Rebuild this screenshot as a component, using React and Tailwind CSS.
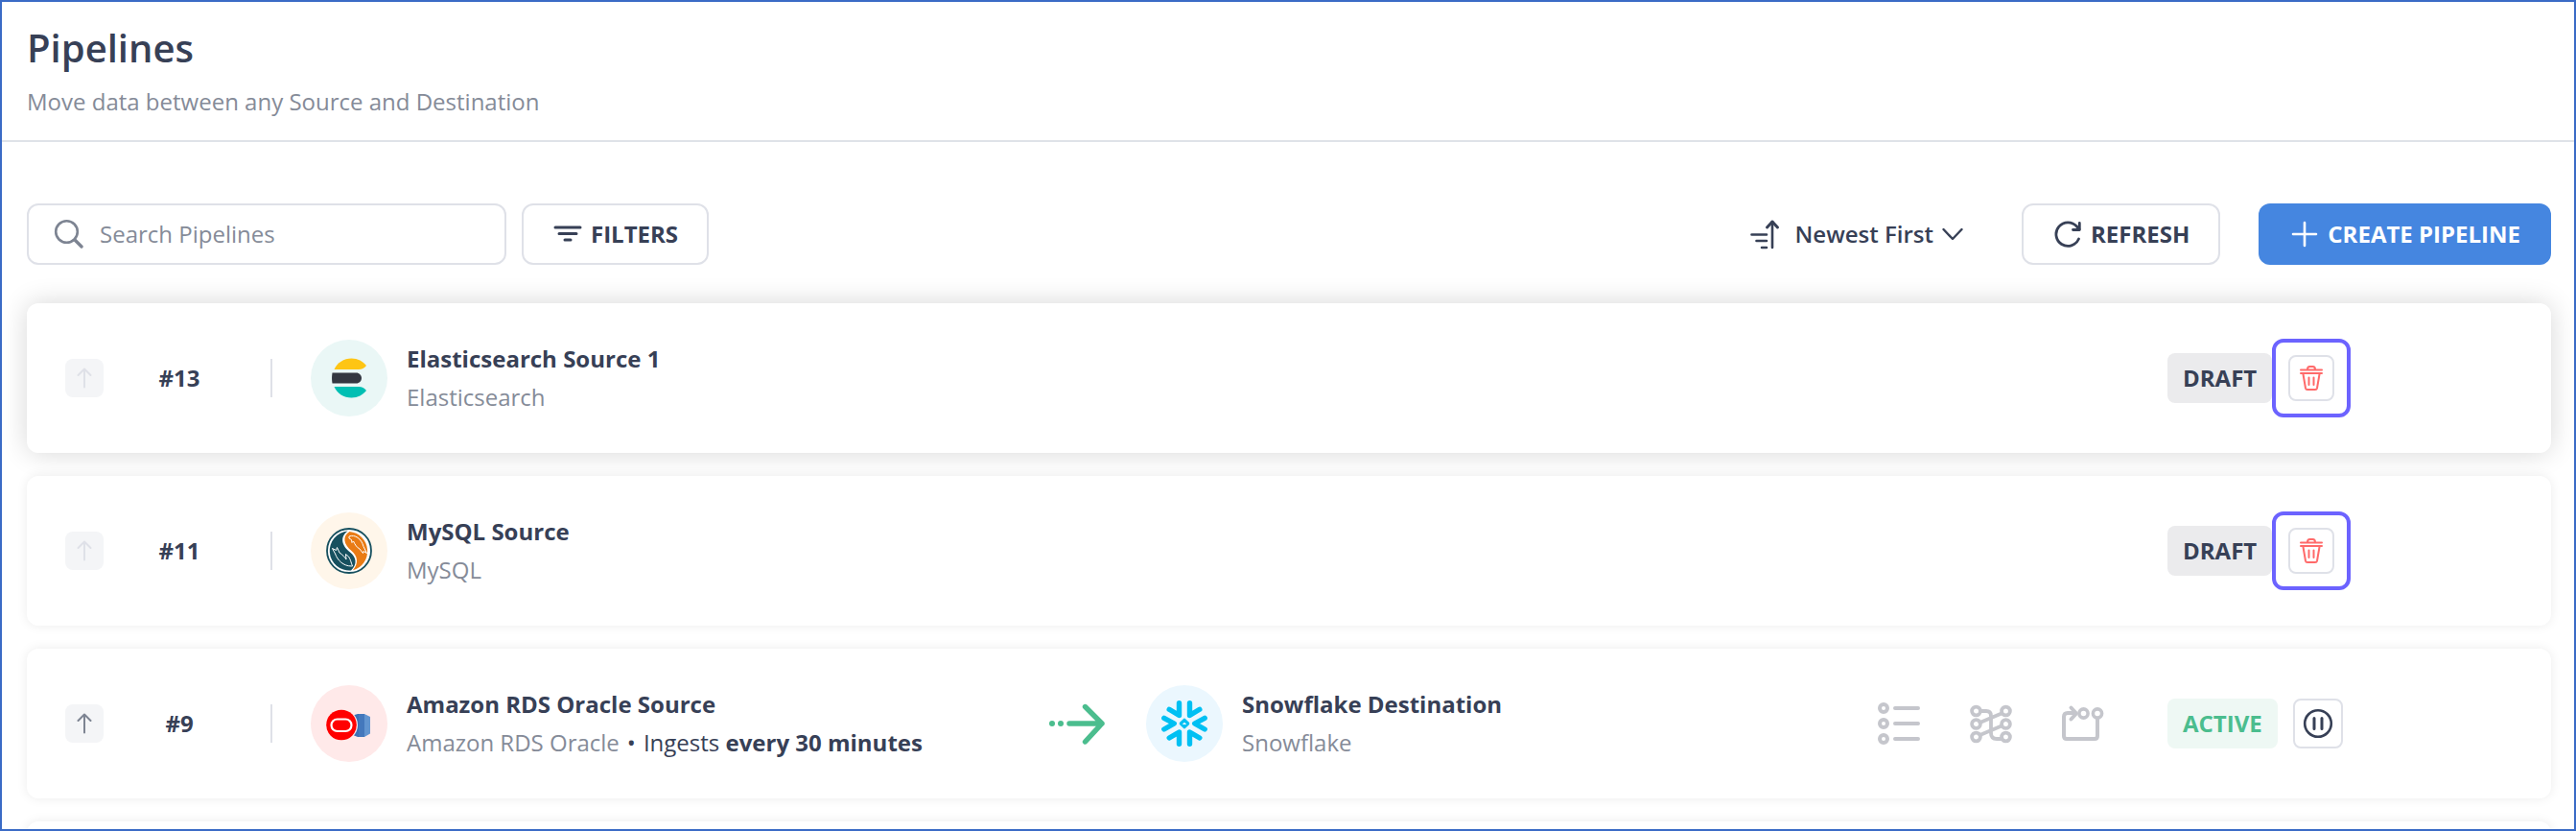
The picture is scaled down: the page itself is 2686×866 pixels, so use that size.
import React, { useState } from "react";

const pipelines = [
  {
    id: 13,
    name: "Elasticsearch Source 1",
    type: "Elasticsearch",
    logo: "elasticsearch",
    status: "DRAFT",
    raised: true,
  },
  {
    id: 11,
    name: "MySQL Source",
    type: "MySQL",
    logo: "mysql",
    status: "DRAFT",
  },
  {
    id: 9,
    name: "Amazon RDS Oracle Source",
    type: "Amazon RDS Oracle",
    logo: "oracle",
    frequency: "every 30 minutes",
    destination: { name: "Snowflake Destination", type: "Snowflake" },
    status: "ACTIVE",
  },
];

/* ---------- Logos ---------- */

const ElasticsearchLogo = () => (
  <svg className="size-20" viewBox="0 0 80 80">
    <circle cx="40" cy="40" r="40" fill="#eaf7f6" />
    <path
      d="M24.5 31C27.5 24 34.5 19.5 42.500 19.500C49 19.500 54.500 22.500 58 27C56 29.500 53.500 31 50 31Z"
      fill="#fec514"
    />
    <path
      d="M22.500 34.500H47.500C50.500 34.500 53 37 53 40C53 43 50.500 45.500 47.500 45.500H22.500C21.900 42 21.900 38 22.500 34.500Z"
      fill="#343741"
    />
    <path
      d="M24.500 49C27.500 56 34.500 60.500 42.500 60.500C49 60.500 54.500 57.500 58 53C56 50.500 53.500 49 50 49Z"
      fill="#00bfb3"
    />
  </svg>
);

const MySQLLogo = () => (
  <svg className="size-20" viewBox="0 0 80 80" fill="none">
    <circle cx="40" cy="40" r="40" fill="#fff6ea" />
    <circle cx="40" cy="40" r="23" fill="#fff" stroke="#17505f" strokeWidth="1.8" />
    <path
      d="M38.500 19.500A20.500 20.500 0 0 0 42 60.400C49 54 47.500 46.500 41 41.500C33 35.500 29.500 26 38.500 19.500Z"
      fill="#17505f"
    />
    <path
      d="M40.500 20A20.500 20.500 0 0 1 44 60.200C50.500 52.500 48.500 45 42.500 40C34.500 33.500 32.500 25 40.500 20Z"
      fill="#e97b15"
    />
    <path
      d="M40 25C46 22.500 53 27.500 55 35.500L58.500 42.500L55 40.500L54.500 42.500L51 38C48.500 37 46 33.500 44.500 30L43 31.500L42.500 28.500L40 27Z"
      stroke="#fff"
      strokeWidth="1"
      strokeLinejoin="round"
    />
    <path
      d="M42.500 56C34 56 28 50 25.500 43L22.500 37.500L26.500 39.500L27.500 36.500L30 42C33 44 35.500 46.500 37 49L36.500 43.500L39.500 46C41.500 49 42 52 43.500 56Z"
      stroke="#fff"
      strokeWidth="1"
      strokeLinejoin="round"
    />
  </svg>
);

const OracleLogo = () => (
  <svg className="size-20" viewBox="0 0 80 80">
    <circle cx="40" cy="40" r="40" fill="#ffe9e9" />
    <path d="M44 31.500L49 30L56 30V54L49 54L44 52Z" fill="#3d71b5" />
    <path d="M56 30L62 33V50.500L56 54Z" fill="#6295d0" />
    <path d="M50 30H56V54H50Z" fill="#4478bc" />
    <circle cx="32" cy="41.500" r="17" fill="#ffe9e9" />
    <circle cx="32" cy="41.500" r="15.800" fill="#ff0000" />
    <rect
      x="21.500"
      y="35.500"
      width="21"
      height="12.500"
      rx="6.200"
      fill="none"
      stroke="#fff"
      strokeWidth="2.200"
    />
  </svg>
);

const SnowflakeLogo = () => (
  <svg
    className="size-20"
    viewBox="0 0 80 80"
    fill="none"
    stroke="#00c0f3"
    strokeWidth="5.400"
    strokeLinecap="round"
    strokeLinejoin="round"
  >
    <circle cx="40" cy="40" r="40" fill="#ebf7fe" stroke="none" />
    <path d="M34.500 18.800V31.500L24.200 25.300" />
    <path d="M45.500 18.800V31.500L55.800 25.300" />
    <path d="M34.500 61.200V49L24.200 55" />
    <path d="M45.500 61.200V49L55.800 55" />
    <path d="M18.800 34.300L29.300 40L18.800 46" />
    <path d="M61.200 34.300L50.700 40L61.200 46" />
    <path d="M40 36.300L43.700 40L40 43.700L36.300 40Z" strokeWidth="3.200" />
  </svg>
);

const logos = {
  elasticsearch: ElasticsearchLogo,
  mysql: MySQLLogo,
  oracle: OracleLogo,
};

/* ---------- Icons ---------- */

const SearchIcon = () => (
  <svg className="size-8 shrink-0" viewBox="0 0 32 32" fill="none" stroke="#7d8492" strokeLinecap="round">
    <circle cx="13.500" cy="13.500" r="11.300" strokeWidth="2.600" />
    <path d="M22 22L29 29" strokeWidth="3.400" />
  </svg>
);

const FilterIcon = () => (
  <svg className="h-5 w-8" viewBox="0 0 32 20" stroke="#374056" strokeWidth="3" strokeLinecap="round">
    <path d="M3 3H29M7 9.500H25M13 16H19" />
  </svg>
);

const SortIcon = () => (
  <svg
    className="size-8"
    viewBox="0 0 32 32"
    fill="none"
    stroke="#374056"
    strokeWidth="2.600"
    strokeLinecap="round"
    strokeLinejoin="round"
  >
    <path d="M2.500 16.500H18M7.500 23H18M13 30H18M24 30V3" />
    <path d="M18.500 9L24 3L29.500 9" strokeWidth="3" />
  </svg>
);

const ChevronIcon = () => (
  <svg
    className="h-4 w-6"
    viewBox="0 0 24 16"
    fill="none"
    stroke="#374056"
    strokeWidth="2.400"
    strokeLinecap="round"
    strokeLinejoin="round"
  >
    <path d="M2.500 3L12 13L21.500 3" />
  </svg>
);

const RefreshIcon = () => (
  <svg
    className="size-8"
    viewBox="0 0 32 32"
    fill="none"
    stroke="#374056"
    strokeWidth="2.800"
    strokeLinecap="round"
    strokeLinejoin="round"
  >
    <path d="M27.500 21A12.300 12.300 0 1 1 25.500 8L28 11" />
    <path d="M28.300 4.500V11.500H21.500" />
  </svg>
);

const PlusIcon = () => (
  <svg className="size-8" viewBox="0 0 32 32" stroke="#fff" strokeWidth="2.600" strokeLinecap="round">
    <path d="M16 4V28M4 16H28" />
  </svg>
);

const UpIcon = () => (
  <svg
    className="size-6"
    viewBox="0 0 24 24"
    fill="none"
    stroke="currentColor"
    strokeWidth="2"
    strokeLinecap="round"
    strokeLinejoin="round"
  >
    <path d="M12 21.500V2.500M5.500 9L12 2.500L18.500 9" />
  </svg>
);

const TrashIcon = () => (
  <svg
    className="size-7"
    viewBox="0 0 28 28"
    fill="none"
    stroke="#ff6a6a"
    strokeWidth="2"
    strokeLinecap="round"
    strokeLinejoin="round"
  >
    <path d="M3 5.500H25M3 9H25M10 5C10 3 11 2 12.500 2H15.500C17 2 18 3 18 5" />
    <path d="M5.500 10L8 24.500C8.200 25.500 9 26 10 26H18C19 26 19.800 25.500 20 24.500L22.500 10M11.500 13.500V21M16.500 13.500V21" />
  </svg>
);

const PauseIcon = () => (
  <svg className="size-8" viewBox="0 0 32 32" fill="none" stroke="#374056" strokeWidth="2.600" strokeLinecap="round">
    <circle cx="16" cy="16" r="13.800" />
    <path d="M12 10.500V21.500M20 10.500V21.500" strokeWidth="3" />
  </svg>
);

const FlowArrow = () => (
  <svg
    className="h-11 w-15"
    viewBox="0 0 60 44"
    fill="none"
    stroke="#4bbd8e"
    strokeWidth="5.400"
    strokeLinecap="round"
    strokeLinejoin="round"
  >
    <path d="M22 22H56M38.500 4.500L56 22L38.500 41" />
    <circle cx="4" cy="22" r="3" fill="#4bbd8e" stroke="none" />
    <circle cx="13" cy="22" r="3" fill="#4bbd8e" stroke="none" />
  </svg>
);

const ListIcon = () => (
  <svg className="size-12" viewBox="0 0 48 48" fill="none" stroke="#c5c6cc" strokeWidth="4" strokeLinecap="round">
    <circle cx="8" cy="8" r="4" />
    <circle cx="8" cy="24" r="4" />
    <circle cx="8" cy="40" r="4" />
    <path d="M20 8H44M20 24H44M20 40H44" />
  </svg>
);

const MapperIcon = () => (
  <svg className="size-12" viewBox="0 0 48 48" fill="none" stroke="#c5c6cc" strokeWidth="3.800" strokeLinecap="round">
    <circle cx="8.500" cy="11" r="4.400" />
    <circle cx="8.500" cy="24.500" r="4.400" />
    <circle cx="8.500" cy="38" r="4.400" />
    <circle cx="39.500" cy="11" r="4.400" />
    <circle cx="39.500" cy="24.500" r="4.400" />
    <circle cx="39.500" cy="38" r="4.400" />
    <path d="M13 11H19C22.500 11 24 12.500 24 16V34C24 38 26 40 30 40H35" />
    <path d="M12.500 23L35 13.500M12.500 36L35 26.500" />
  </svg>
);

const SchemaIcon = () => (
  <svg
    className="size-12"
    viewBox="0 0 48 48"
    fill="none"
    stroke="#c5c6cc"
    strokeWidth="4"
    strokeLinecap="round"
    strokeLinejoin="round"
  >
    <path d="M15 13H8C5.500 13 4 14.500 4 17V37C4 39 5 40 7 40H36C38 40 39 39 39 37V20" />
    <path d="M11.500 7.500L17 13.500L11.500 19.500" />
    <circle cx="24.500" cy="13.500" r="4.600" strokeWidth="3.600" />
    <circle cx="39" cy="13.500" r="4.600" strokeWidth="3.600" />
  </svg>
);

/* ---------- Rows ---------- */

const PipelineCard = ({ pipeline }) => {
  const Logo = logos[pipeline.logo];
  const isDraft = pipeline.status === "DRAFT";

  return (
    <li
      className={`flex h-39 items-center rounded-xl bg-white pl-10 ${
        pipeline.raised
          ? "shadow-[0_0_28px_rgba(0,0,0,0.16)]"
          : "shadow-[0_0_12px_rgba(0,0,0,0.08)]"
      }`}
    >
      {/* Priority */}
      <button
        type="button"
        aria-label="Prioritize pipeline"
        disabled={isDraft}
        className="flex size-10 shrink-0 items-center justify-center rounded-lg bg-[#f4f5f7] text-[#7d8492] disabled:text-[#dfe1e8]"
      >
        <UpIcon />
      </button>
      <span className="w-[158px] shrink-0 text-center font-bold">#{pipeline.id}</span>
      <div className="mr-10 ml-4 h-10 w-0.5 shrink-0 bg-[#dfe1e8]" />

      {/* Source */}
      <div className="flex flex-1 items-center gap-5">
        <Logo />
        <div className="leading-10">
          <h2 className="font-bold">{pipeline.name}</h2>
          <p className="text-[#858b98]">
            {pipeline.type}
            {pipeline.frequency && (
              <span className="text-[#374056]">
                <span className="px-2">•</span>
                Ingests <b>{pipeline.frequency}</b>
              </span>
            )}
          </p>
        </div>
      </div>

      {/* Destination */}
      {pipeline.destination && (
        <>
          <div className="w-[110px] shrink-0 pl-2">
            <FlowArrow />
          </div>
          <div className="flex flex-1 items-center gap-5">
            <SnowflakeLogo />
            <div className="leading-10">
              <h2 className="font-bold">{pipeline.destination.name}</h2>
              <p className="text-[#858b98]">{pipeline.destination.type}</p>
            </div>
          </div>
          <div className="mr-16 flex shrink-0 gap-12">
            <button type="button" aria-label="Activity log">
              <ListIcon />
            </button>
            <button type="button" aria-label="Schema mapper">
              <MapperIcon />
            </button>
            <button type="button" aria-label="Transformations">
              <SchemaIcon />
            </button>
          </div>
        </>
      )}

      {/* Status */}
      <div className="flex w-100 shrink-0 items-center">
        {isDraft ? (
          <>
            <span className="rounded-lg bg-[#ebebed] px-4 leading-[52px] font-bold">DRAFT</span>
            <div className="rounded-xl border-4 border-[#6c63ff] p-[13px]">
              <button
                type="button"
                aria-label="Delete pipeline"
                className="flex size-12 items-center justify-center rounded-lg border-2 border-[#dfe1e8] bg-white"
              >
                <TrashIcon />
              </button>
            </div>
          </>
        ) : (
          <>
            <span className="mr-4 rounded-lg bg-[#eef8f4] px-4 leading-[52px] font-bold text-[#4bbd8e]">
              {pipeline.status}
            </span>
            <button
              type="button"
              aria-label="Pause pipeline"
              className="flex size-13 items-center justify-center rounded-lg border-2 border-[#dfe1e8] bg-white"
            >
              <PauseIcon />
            </button>
          </>
        )}
      </div>
    </li>
  );
};

const App = () => {
  const [search, setSearch] = useState("");

  return (
    <div className="h-screen overflow-hidden border-2 border-[#3b6bc6] bg-white font-['Open_Sans',sans-serif] text-2xl text-[#374056]">
      <header className="border-b-2 border-[#dfe3e8] px-[26px] pt-5 pb-5">
        <h1 className="text-[40px] leading-14 font-semibold">Pipelines</h1>
        <p className="mt-2 leading-10 text-[#858b98]">Move data between any Source and Destination</p>
      </header>

      <main className="pt-16 pr-6 pl-[26px]">
        <div className="flex items-center">
          <label className="flex h-16 w-[500px] items-center gap-4 rounded-xl border-2 border-[#dfe1e8] pr-4 pl-[26px]">
            <SearchIcon />
            <input
              type="text"
              aria-label="Search Pipelines"
              placeholder="Search Pipelines"
              value={search}
              onChange={(e) => setSearch(e.target.value)}
              className="min-w-0 flex-1 outline-none placeholder:text-[#858b98]"
            />
          </label>
          <button
            type="button"
            className="ml-4 flex h-16 items-center gap-2 rounded-xl border-2 border-[#dfe1e8] px-[30px] font-bold"
          >
            <FilterIcon />
            FILTERS
          </button>

          <div className="ml-auto flex items-center">
            <SortIcon />
            <select
              aria-label="Sort pipelines"
              className="field-sizing-content ml-4 appearance-none bg-transparent font-semibold outline-none"
            >
              <option>Newest First</option>
            </select>
            <span className="pointer-events-none ml-2">
              <ChevronIcon />
            </span>
          </div>
          <button
            type="button"
            className="ml-15 flex h-16 items-center gap-2 rounded-xl border-2 border-[#dfe1e8] px-[30px] font-bold"
          >
            <RefreshIcon />
            REFRESH
          </button>
          <button
            type="button"
            className="ml-10 flex h-16 items-center gap-2 rounded-xl bg-[#4586e0] px-8 font-bold text-white"
          >
            <PlusIcon />
            CREATE PIPELINE
          </button>
        </div>

        <ul className="mt-10 flex flex-col gap-6">
          {pipelines.map((pipeline) => (
            <PipelineCard key={pipeline.id} pipeline={pipeline} />
          ))}
          <li className="h-39 rounded-xl bg-white shadow-[0_0_12px_rgba(0,0,0,0.08)]" />
        </ul>
      </main>
    </div>
  );
};

export default App;
